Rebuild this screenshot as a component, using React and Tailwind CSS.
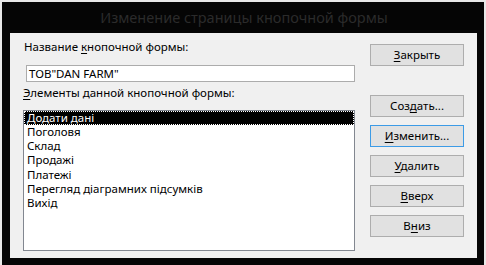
import React from 'react';

const font = { fontFamily: '"Noto Sans", "Open Sans", sans-serif' };

const items = [
  'Додати дані',
  'Поголовя',
  'Склад',
  'Продажі',
  'Платежі',
  'Перегляд діаграмних підсумків',
  'Вихід',
];

const Btn = ({ pre, key1, post, focused, className = '' }) => (
  <button
    className={`w-[94px] h-[22px] text-[11.5px] leading-[20px] text-black border ${
      focused ? 'border-[#3c9be6]' : 'border-[#adadad]'
    } bg-[#e1e1e1] ${className}`}
  >
    {pre}
    <span className="underline underline-offset-[2px] decoration-1">{key1}</span>
    {post}
  </button>
);

const App = () => {
  return (
    <div
      className="w-[486px] h-[265px] bg-[#050505] border-t-2 border-x-2 border-[#e8e8e8] flex flex-col"
      style={font}
    >
      <div className="h-[31px] flex items-center justify-center text-[14.5px] text-[#2b2b2b] pl-[2px]">
        Изменение страницы кнопочной формы
      </div>
      <div className="ml-[8px] mr-[7px] mb-[7px] flex-1 bg-[#f0f0f0] flex">
        <div className="pl-[13px] pt-[6px] flex flex-col">
          <div className="ml-[1px] h-[16px] leading-[16px] text-[11.5px] text-black">
            Название <span className="underline underline-offset-[2px] decoration-1">к</span>нопочной формы:
          </div>
          <div className="mt-[10px] ml-[3px] w-[329px] h-[17px] bg-white border border-[#acacac] text-[11.5px] leading-[15px] text-black pl-[2px]">
            ТОВ"DAN FARM"
          </div>
          <div className="mt-[3px] h-[16px] leading-[16px] text-[11.5px] text-black">
            <span className="underline underline-offset-[2px] decoration-1">Э</span>лементы данной кнопочной формы:
          </div>
          <div className="mt-[9px] w-[332px] h-[141px] bg-white border border-[#828790] flex flex-col">
            {items.map((t, i) => (
              <div
                key={t}
                className={`h-[14.17px] leading-[14px] text-[11.5px] pl-[3px] ${
                  i === 0
                    ? 'bg-black text-white outline-1 outline-dotted outline-white -outline-offset-1'
                    : 'text-black'
                }`}
              >
                {t}
              </div>
            ))}
          </div>
        </div>
        <div className="ml-[15px] pt-[11px] flex flex-col">
          <Btn pre="" key1="З" post="акрыть" />
          <Btn pre="Соз" key1="д" post="ать..." className="mt-[29px]" />
          <Btn pre="" key1="И" post="зменить..." focused className="mt-[8px]" />
          <Btn pre="" key1="У" post="далить" className="mt-[8px]" />
          <Btn pre="" key1="В" post="верх" className="mt-[8px]" />
          <Btn pre="В" key1="н" post="из" className="mt-[8px]" />
        </div>
      </div>
    </div>
  );
};

export default App;
